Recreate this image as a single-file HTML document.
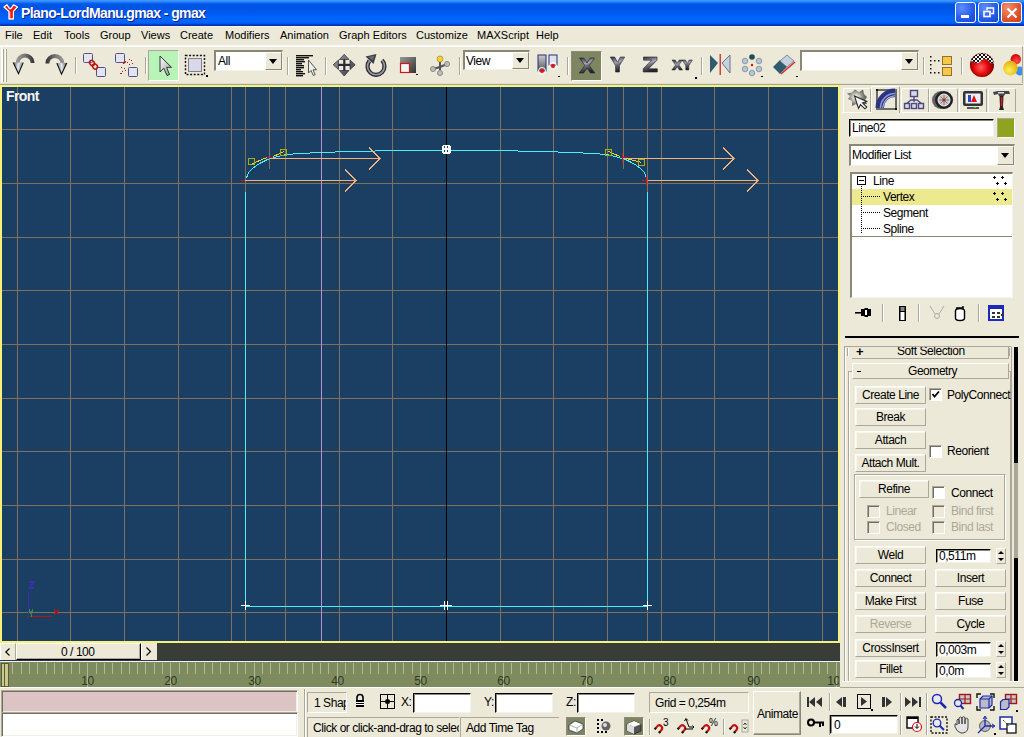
<!DOCTYPE html>
<html><head><meta charset="utf-8">
<style>
*{margin:0;padding:0;box-sizing:border-box}
html,body{width:1024px;height:737px;overflow:hidden}
body{position:relative;background:#ECE9D8;font-family:"Liberation Sans",sans-serif;font-size:11px;color:#000}
.a{position:absolute}
.t{position:absolute;white-space:nowrap;line-height:1}
svg{overflow:visible}
#title{left:0;top:0;width:1024px;height:26px;background:linear-gradient(#3D95FF 0px,#3A92FF 1px,#2a80ff 2px,#0663F2 3px,#0055E2 5px,#0055E6 9px,#005CF2 14px,#0064FC 18px,#0066FF 21px,#0060F6 23px,#004DD8 24px,#0030B8 25px,#0030B8 26px)}
</style></head><body>
<div id="title" class="a"></div>
<svg class="a" style="left:3px;top:4px" width="16" height="16" viewBox="0 0 16 16" ><path d="M1,3 L4,0.8 L6.5,4.5 L8,4.5 L10.5,0.8 L14.5,3 L10.5,7.5 L10.5,15 L6,15 L6,7.5 Z" fill="#000" transform="translate(0.8,0.8)"/><path d="M1,3 L4,0.8 L6.5,4.5 L8,4.5 L10.5,0.8 L14.5,3 L10.5,7.5 L10.5,15 L6,15 L6,7.5 Z" fill="#F01818" stroke="#fff" stroke-width="1.3" stroke-linejoin="round"/><path d="M7,8 L7,14" stroke="#fff" stroke-width="0.8" opacity="0.6"/></svg>
<div class="t" style="left:21px;top:6px;font-size:14px;font-weight:bold;letter-spacing:-0.6px;color:#fff;text-shadow:1px 1px 0 #0A1E8A">Plano-LordManu.gmax - gmax</div>
<div class="a" style="left:955px;top:2px;width:21px;height:21px;border:1px solid #fff;border-radius:3px;background:radial-gradient(circle at 30% 25%,#5C8EFF,#2559E8 60%,#1C46D2)"></div>
<div class="a" style="left:978px;top:2px;width:21px;height:21px;border:1px solid #fff;border-radius:3px;background:radial-gradient(circle at 30% 25%,#5C8EFF,#2559E8 60%,#1C46D2)"></div>
<div class="a" style="left:1001px;top:2px;width:21px;height:21px;border:1px solid #fff;border-radius:3px;background:radial-gradient(circle at 30% 25%,#F2906C,#E0512C 60%,#C8401E)"></div>
<div class="a" style="left:961px;top:15px;width:8px;height:3px;background:#fff"></div>
<svg class="a" style="left:983px;top:7px" width="12" height="12" viewBox="0 0 12 12" ><rect x="1" y="4.5" width="6" height="5" fill="none" stroke="#fff" stroke-width="1.6"/><path d="M4,3.5 L4,1 L10.5,1 L10.5,6.5 L8,6.5" fill="none" stroke="#fff" stroke-width="1.4"/></svg>
<svg class="a" style="left:1005px;top:6px" width="14" height="14" viewBox="0 0 14 14" ><path d="M2.5,2.5 L11.5,11.5 M11.5,2.5 L2.5,11.5" stroke="#fff" stroke-width="2.2"/></svg>
<div class="a" style="left:0;top:26px;width:1024px;height:1px;background:#F7F5E6"></div>
<div class="t" style="left:5px;top:30px;font-size:11px;">File</div>
<div class="t" style="left:33px;top:30px;font-size:11px;">Edit</div>
<div class="t" style="left:64px;top:30px;font-size:11px;">Tools</div>
<div class="t" style="left:100px;top:30px;font-size:11px;">Group</div>
<div class="t" style="left:141px;top:30px;font-size:11px;">Views</div>
<div class="t" style="left:180px;top:30px;font-size:11px;">Create</div>
<div class="t" style="left:225px;top:30px;font-size:11px;">Modifiers</div>
<div class="t" style="left:280px;top:30px;font-size:11px;">Animation</div>
<div class="t" style="left:339px;top:30px;font-size:11px;">Graph Editors</div>
<div class="t" style="left:416px;top:30px;font-size:11px;">Customize</div>
<div class="t" style="left:477px;top:30px;font-size:11px;">MAXScript</div>
<div class="t" style="left:536px;top:30px;font-size:11px;">Help</div>
<div class="a" style="left:0;top:45px;width:1024px;height:1px;background:#FAF9F4"></div>
<div class="a" style="left:0;top:46px;width:1024px;height:1px;background:#fff"></div>
<div class="a" style="left:1px;top:46px;width:1px;height:38px;background:#fff"></div>
<div class="a" style="left:2px;top:49px;width:1px;height:33px;background:#fff"></div><div class="a" style="left:3px;top:49px;width:1px;height:33px;background:#ACA899"></div>
<div class="a" style="left:5px;top:49px;width:1px;height:33px;background:#fff"></div><div class="a" style="left:6px;top:49px;width:1px;height:33px;background:#ACA899"></div>
<svg class="a" style="left:13px;top:54px" width="23" height="21" viewBox="0 0 23 21" ><defs><linearGradient id="ug1" x1="0" y1="0" x2="1" y2="0"><stop offset="0" stop-color="#9a9a9a"/><stop offset="0.45" stop-color="#7a7a7a"/><stop offset="1" stop-color="#2e2e2e"/></linearGradient><linearGradient id="ua1" x1="0" y1="0" x2="1" y2="0.2"><stop offset="0" stop-color="#505058"/><stop offset="0.55" stop-color="#e8e8ee"/><stop offset="1" stop-color="#70707a"/></linearGradient></defs><path d="M2.6,9 A9.5,9.5 0 0 1 21.6,9 L17.6,9 A5.5,5.5 0 0 0 6.6,9 Z" fill="url(#ug1)"/><path d="M0.2,8.6 L10.2,8.6 L5.5,19.6 Z" fill="url(#ua1)"/><path d="M0.2,8.6 L5.5,19.6 L10.2,8.6" fill="none" stroke="#111" stroke-width="1.1"/></svg>
<svg class="a" style="left:45px;top:54px" width="23" height="21" viewBox="0 0 23 21" ><g transform="translate(22,0.5) scale(-1,1)"><defs><linearGradient id="ug2" x1="0" y1="0" x2="1" y2="0"><stop offset="0" stop-color="#9a9a9a"/><stop offset="0.45" stop-color="#7a7a7a"/><stop offset="1" stop-color="#2e2e2e"/></linearGradient><linearGradient id="ua2" x1="0" y1="0" x2="1" y2="0.2"><stop offset="0" stop-color="#505058"/><stop offset="0.55" stop-color="#e8e8ee"/><stop offset="1" stop-color="#70707a"/></linearGradient></defs><path d="M2.6,9 A9.5,9.5 0 0 1 21.6,9 L17.6,9 A5.5,5.5 0 0 0 6.6,9 Z" fill="url(#ug2)"/><path d="M0.2,8.6 L10.2,8.6 L5.5,19.6 Z" fill="url(#ua2)"/><path d="M0.2,8.6 L5.5,19.6 L10.2,8.6" fill="none" stroke="#111" stroke-width="1.1"/></g></svg>
<div class="a" style="left:75px;top:57px;width:1px;height:17px;background:#ACA899"></div><div class="a" style="left:76px;top:57px;width:1px;height:17px;background:#fff"></div>
<svg class="a" style="left:83px;top:53px" width="24" height="25" viewBox="0 0 24 25" ><rect x="0.5" y="0.5" width="9" height="9" rx="1" fill="#E4E4F0" stroke="#50508C"/><rect x="13.5" y="14.5" width="9" height="9" rx="1" fill="#E4E4F0" stroke="#50508C"/><g fill="none" stroke="#C01010" stroke-width="1.5"><ellipse cx="9" cy="10" rx="2.2" ry="2.8" transform="rotate(-40 9 10)"/><ellipse cx="12" cy="13.5" rx="2.2" ry="2.8" transform="rotate(-40 12 13.5)"/></g></svg>
<svg class="a" style="left:115px;top:53px" width="24" height="25" viewBox="0 0 24 25" ><rect x="0.5" y="0.5" width="9" height="9" rx="1" fill="#E4E4F0" stroke="#50508C"/><rect x="13.5" y="14.5" width="9" height="9" rx="1" fill="#E4E4F0" stroke="#50508C"/><g fill="#C01010"><path d="M8,11 A2.5,2.5 0 0 1 11,8 L11,9.5 A1.2,1.2 0 0 0 9.5,11 Z"/><rect x="14" y="6" width="1" height="1"/><rect x="16" y="7" width="1" height="1"/><rect x="12" y="9" width="1" height="1"/><rect x="17" y="10" width="1" height="1"/><rect x="14" y="11" width="1" height="1"/><rect x="6" y="14" width="1" height="1"/><rect x="9" y="15" width="1" height="1"/><rect x="7" y="18" width="1" height="1"/><rect x="10" y="17" width="1" height="1"/><rect x="5" y="20" width="2" height="1"/></g></svg>
<div class="a" style="left:145px;top:57px;width:1px;height:17px;background:#ACA899"></div><div class="a" style="left:146px;top:57px;width:1px;height:17px;background:#fff"></div>
<div class="a" style="left:148px;top:50px;width:31px;height:31px;background:#B8F4B8;border:1px solid;border-color:#ACA899 #fff #fff #ACA899"></div>
<svg class="a" style="left:159px;top:55px" width="14" height="23" viewBox="0 0 14 23" ><defs><linearGradient id="cur" x1="0" y1="0" x2="1" y2="1"><stop offset="0" stop-color="#fff"/><stop offset="1" stop-color="#999"/></linearGradient></defs><path d="M1,1 L1,17 L4.8,13.2 L8,20.5 L10.5,19.5 L7.5,12.3 L12.5,12.3 Z" fill="url(#cur)" stroke="#333" stroke-width="1"/></svg>
<svg class="a" style="left:184px;top:54px" width="25" height="24" viewBox="0 0 25 24" ><rect x="1.5" y="1.5" width="19" height="19" fill="none" stroke="#111" stroke-width="1.4" stroke-dasharray="2,1.6"/><rect x="4.5" y="4.5" width="13" height="13" fill="#D8D8E8" stroke="#808090"/><path d="M22,21 L24,21 L24,23 L22,23Z" fill="#000"/></svg>
<div class="a" style="left:214px;top:50px;width:69px;height:21px;background:#fff;border-top:2px solid #8A8776;border-left:2px solid #8A8776;border-right:1px solid #F4F2E8;border-bottom:1px solid #F4F2E8"><div class="a" style="right:0;top:0;width:17px;height:18px;background:#ECE9D8;border-right:1px solid #8A8776;border-bottom:1px solid #8A8776;border-left:1px solid #fff;border-top:1px solid #fff"></div><div class="a" style="right:5px;top:7px;width:0;height:0;border-left:4px solid transparent;border-right:4px solid transparent;border-top:5px solid #000"></div><div class="t" style="left:2px;top:3px;font-size:12px;letter-spacing:-0.45px">All</div></div>
<div class="a" style="left:287px;top:57px;width:1px;height:18px;background:#ACA899"></div><div class="a" style="left:288px;top:57px;width:1px;height:18px;background:#fff"></div>
<svg class="a" style="left:295px;top:54px" width="23" height="23" viewBox="0 0 23 23" ><g fill="#111"><rect x="1" y="1" width="17" height="1.4"/><rect x="1" y="3" width="13" height="1.4"/><rect x="1" y="5" width="8" height="1.4"/><rect x="1" y="7" width="9" height="1.4"/><rect x="1" y="9" width="6" height="1.4"/><rect x="1" y="11" width="8" height="1.4"/><rect x="1" y="13" width="8" height="1.4"/><rect x="1" y="15" width="5" height="1.4"/><rect x="1" y="17" width="7" height="1.4"/><rect x="1" y="19" width="9" height="1.4"/><rect x="1" y="21" width="7" height="1.4"/></g><path d="M13.5,6 L13.5,19 L16,16.5 L18.3,21.5 L20.2,20.6 L18,15.8 L21.5,15.8 Z" fill="#EEE" stroke="#444" stroke-width="0.9"/></svg>
<div class="a" style="left:325px;top:57px;width:1px;height:18px;background:#ACA899"></div><div class="a" style="left:326px;top:57px;width:1px;height:18px;background:#fff"></div>
<svg class="a" style="left:333px;top:54px" width="23" height="23" viewBox="0 0 23 23" ><defs><linearGradient id="mv" x1="0" y1="0" x2="1" y2="1"><stop offset="0" stop-color="#9a9aa4"/><stop offset="1" stop-color="#3a3a44"/></linearGradient></defs><rect x="10.2" y="4" width="2.2" height="15" fill="#2a2a32"/><rect x="4" y="9.8" width="15" height="2.2" fill="#2a2a32"/><path d="M11.2,0.3 L16,5.5 L6.4,5.5 Z M11.2,22 L16,16.5 L6.4,16.5 Z M0.2,10.8 L5.5,6 L5.5,15.6 Z M22.2,10.8 L17,6 L17,15.6 Z" fill="url(#mv)" stroke="#2a2a32" stroke-width="0.7"/></svg>
<svg class="a" style="left:365px;top:55px" width="23" height="23" viewBox="0 0 23 23" ><path d="M17,5.3 A8.5,8.5 0 1 1 4.4,5.95" fill="none" stroke="#2a2a30" stroke-width="4.2"/><path d="M17,5.3 A8.5,8.5 0 1 1 4.4,5.95" fill="none" stroke="#9c9ca8" stroke-width="1.6"/><path d="M0.5,1.5 L11.5,-1 L8.5,9 Z" fill="#3a3a42"/><path d="M3,2 L9.5,0.5 L8,5.5 Z" fill="#6a6a74"/></svg>
<svg class="a" style="left:399px;top:56px" width="19" height="19" viewBox="0 0 19 19" ><defs><linearGradient id="sc" x1="0" y1="0" x2="1" y2="1"><stop offset="0" stop-color="#999"/><stop offset="1" stop-color="#333"/></linearGradient></defs><rect x="1" y="1" width="16" height="16" fill="url(#sc)"/><rect x="1.5" y="7.5" width="9" height="9" fill="#F4F4F4" stroke="#D01818" stroke-width="1.2"/><rect x="17" y="18" width="2" height="1" fill="#000"/></svg>
<svg class="a" style="left:430px;top:55px" width="20" height="21" viewBox="0 0 20 21" ><g stroke="#555" stroke-width="2"><path d="M10,5 L10,15 M3,14 L10,12 L17,9"/></g><circle cx="10" cy="4" r="3" fill="#F4D040" stroke="#A08010" stroke-width="0.6"/><circle cx="3" cy="14" r="2.6" fill="#bbb" stroke="#666" stroke-width="0.6"/><circle cx="17" cy="9" r="2.6" fill="#bbb" stroke="#666" stroke-width="0.6"/><circle cx="10" cy="18" r="2.6" fill="#bbb" stroke="#666" stroke-width="0.6"/></svg>
<div class="a" style="left:459px;top:57px;width:1px;height:18px;background:#ACA899"></div><div class="a" style="left:460px;top:57px;width:1px;height:18px;background:#fff"></div>
<div class="a" style="left:463px;top:50px;width:67px;height:20px;background:#fff;border-top:2px solid #8A8776;border-left:2px solid #8A8776;border-right:1px solid #F4F2E8;border-bottom:1px solid #F4F2E8"><div class="a" style="right:0;top:0;width:17px;height:17px;background:#ECE9D8;border-right:1px solid #8A8776;border-bottom:1px solid #8A8776;border-left:1px solid #fff;border-top:1px solid #fff"></div><div class="a" style="right:5px;top:6px;width:0;height:0;border-left:4px solid transparent;border-right:4px solid transparent;border-top:5px solid #000"></div><div class="t" style="left:1px;top:3px;font-size:12px;letter-spacing:-0.45px">View</div></div>
<svg class="a" style="left:537px;top:54px" width="23" height="23" viewBox="0 0 23 23" ><defs><linearGradient id="pv" x1="0" y1="0" x2="0" y2="1"><stop offset="0" stop-color="#ccc"/><stop offset="1" stop-color="#555"/></linearGradient></defs><rect x="1" y="1" width="8" height="16" fill="url(#pv)" stroke="#223080" stroke-width="1"/><rect x="12" y="1" width="8" height="10" fill="#E0E0F0" stroke="#223080" stroke-width="1"/><circle cx="5" cy="17" r="3.5" fill="none" stroke="#fff" stroke-width="1"/><circle cx="5" cy="17" r="2" fill="#E81010"/><circle cx="16" cy="12" r="3.5" fill="none" stroke="#fff" stroke-width="1"/><circle cx="16" cy="12" r="2" fill="#E81010"/><rect x="21" y="22" width="2" height="1" fill="#000"/></svg>
<div class="a" style="left:567px;top:57px;width:1px;height:18px;background:#ACA899"></div><div class="a" style="left:568px;top:57px;width:1px;height:18px;background:#fff"></div>
<div class="a" style="left:571px;top:51px;width:31px;height:30px;background:#7D8561;border:1px solid;border-color:#8D8B7C #fff #fff #8D8B7C"></div>
<svg class="a" style="left:579px;top:58px" width="16" height="16" viewBox="0 0 16 16" ><defs><linearGradient id="gx" x1="0" y1="0" x2="0.3" y2="1"><stop offset="0" stop-color="#2c2c36"/><stop offset="0.45" stop-color="#a4a4b4"/><stop offset="0.6" stop-color="#70707e"/><stop offset="1" stop-color="#24242c"/></linearGradient></defs><path d="M0.5,0 L4.8,0 L8,5 L11.2,0 L15.5,0 L10.2,7.5 L15.8,15 L11.5,15 L8,10 L4.5,15 L0.2,15 L5.8,7.5 Z" fill="url(#gx)" stroke="#1e1e26" stroke-width="0.6"/></svg>
<svg class="a" style="left:610px;top:57px" width="16" height="16" viewBox="0 0 16 16" ><defs><linearGradient id="gy" x1="0" y1="0" x2="0.3" y2="1"><stop offset="0" stop-color="#2c2c36"/><stop offset="0.45" stop-color="#a4a4b4"/><stop offset="0.6" stop-color="#70707e"/><stop offset="1" stop-color="#24242c"/></linearGradient></defs><path d="M0.3,0 L4.6,0 L7.5,5.2 L10.4,0 L14.7,0 L9.4,8.6 L9.4,15 L5.6,15 L5.6,8.6 Z" fill="url(#gy)" stroke="#1e1e26" stroke-width="0.6"/></svg>
<svg class="a" style="left:643px;top:57px" width="15" height="16" viewBox="0 0 15 16" ><defs><linearGradient id="gz" x1="0" y1="0" x2="0.3" y2="1"><stop offset="0" stop-color="#2c2c36"/><stop offset="0.45" stop-color="#a4a4b4"/><stop offset="0.6" stop-color="#70707e"/><stop offset="1" stop-color="#24242c"/></linearGradient></defs><path d="M0.5,0 L14,0 L14,3.2 L5.6,11.8 L14.3,11.8 L14.3,15 L0.2,15 L0.2,11.8 L8.6,3.2 L0.5,3.2 Z" fill="url(#gz)" stroke="#1e1e26" stroke-width="0.6"/></svg>
<svg class="a" style="left:672px;top:60px" width="21" height="11" viewBox="0 0 21 11" ><defs><linearGradient id="gxy" x1="0" y1="0" x2="0.3" y2="1"><stop offset="0" stop-color="#2c2c36"/><stop offset="0.45" stop-color="#a4a4b4"/><stop offset="0.6" stop-color="#70707e"/><stop offset="1" stop-color="#24242c"/></linearGradient></defs><path d="M0,0 L3.2,0 L5.2,3.3 L7.2,0 L10.4,0 L6.9,5 L10.6,10 L7.4,10 L5.2,6.7 L3,10 L-0.2,10 L3.5,5 Z M10.2,0 L13.4,0 L15.3,3.4 L17.2,0 L20.4,0 L16.8,5.8 L16.8,10 L13.8,10 L13.8,5.8 Z" fill="url(#gxy)" stroke="#1e1e26" stroke-width="0.5"/></svg>
<div class="a" style="left:695px;top:77px;width:2px;height:2px;background:#000"></div>
<div class="a" style="left:701px;top:57px;width:1px;height:18px;background:#ACA899"></div><div class="a" style="left:702px;top:57px;width:1px;height:18px;background:#fff"></div>
<svg class="a" style="left:709px;top:54px" width="23" height="21" viewBox="0 0 23 21" ><path d="M1,1 L9,9 L1,19 Z" fill="#2E5C6E"/><path d="M21,1 L13,9 L21,19 Z" fill="#C8D0DC" stroke="#6A7480"/><rect x="10.5" y="0" width="1.5" height="21" fill="#D04040"/></svg>
<svg class="a" style="left:741px;top:54px" width="22" height="23" viewBox="0 0 22 23" ><circle cx="11" cy="3" r="2.8" fill="#244858"/><circle cx="4" cy="7" r="2.8" fill="#B8C4D8" stroke="#607080" stroke-width="0.6"/><circle cx="18" cy="7" r="2.8" fill="#B8C4D8" stroke="#607080" stroke-width="0.6"/><circle cx="4" cy="15" r="2.8" fill="#B8C4D8" stroke="#607080" stroke-width="0.6"/><circle cx="18" cy="15" r="2.8" fill="#B8C4D8" stroke="#607080" stroke-width="0.6"/><circle cx="11" cy="19" r="2.8" fill="#B8C4D8" stroke="#607080" stroke-width="0.6"/><circle cx="11" cy="11" r="1.2" fill="#E01010"/><rect x="20" y="22" width="2" height="1" fill="#000"/></svg>
<svg class="a" style="left:772px;top:54px" width="26" height="24" viewBox="0 0 26 24" ><path d="M1,13 L8,6 L15,13 L8,20 Z" fill="#2E5C6E"/><path d="M8,7 L15,1 L22,7 L15,13 Z" fill="#C8D0E0" stroke="#6A7480" stroke-width="0.8"/><path d="M9,20 L23,8" stroke="#E02828" stroke-width="1.5"/><rect x="24" y="22" width="2" height="1" fill="#000"/></svg>
<div class="a" style="left:800px;top:50px;width:119px;height:21px;background:#fff;border-top:2px solid #8A8776;border-left:2px solid #8A8776;border-right:1px solid #F4F2E8;border-bottom:1px solid #F4F2E8"><div class="a" style="right:0;top:0;width:17px;height:18px;background:#ECE9D8;border-right:1px solid #8A8776;border-bottom:1px solid #8A8776;border-left:1px solid #fff;border-top:1px solid #fff"></div><div class="a" style="right:5px;top:7px;width:0;height:0;border-left:4px solid transparent;border-right:4px solid transparent;border-top:5px solid #000"></div></div>
<div class="a" style="left:923px;top:57px;width:1px;height:18px;background:#ACA899"></div><div class="a" style="left:924px;top:57px;width:1px;height:18px;background:#fff"></div>
<svg class="a" style="left:929px;top:54px" width="25" height="23" viewBox="0 0 25 23" ><g fill="#111"><rect x="1" y="2" width="1.5" height="1.5"/><rect x="1" y="6" width="1.5" height="1.5"/><rect x="1" y="10" width="1.5" height="1.5"/><rect x="1" y="14" width="1.5" height="1.5"/><rect x="1" y="18" width="1.5" height="1.5"/><rect x="5" y="6" width="1.5" height="1.5"/><rect x="9" y="6" width="1.5" height="1.5"/><rect x="5" y="18" width="1.5" height="1.5"/><rect x="9" y="18" width="1.5" height="1.5"/></g><rect x="13.5" y="2.5" width="9" height="8" fill="#F4C84C" stroke="#9A7020"/><rect x="13.5" y="13.5" width="9" height="8" fill="#F4C84C" stroke="#9A7020"/></svg>
<div class="a" style="left:961px;top:57px;width:1px;height:18px;background:#ACA899"></div><div class="a" style="left:962px;top:57px;width:1px;height:18px;background:#fff"></div>
<svg class="a" style="left:969px;top:52px" width="27" height="26" viewBox="0 0 27 26" ><defs><radialGradient id="me" cx="0.45" cy="0.6" r="0.6"><stop offset="0" stop-color="#FF6060"/><stop offset="0.5" stop-color="#E00808"/><stop offset="1" stop-color="#700000"/></radialGradient><clipPath id="mc"><circle cx="13" cy="13" r="12"/></clipPath><clipPath id="mw"><path d="M0,0 L26,0 L26,11 Q22,13 20,9 Q16,5 12,9 Q8,13 5,10 Q2,8 0,12 Z"/></clipPath></defs><circle cx="13" cy="13" r="12" fill="url(#me)"/><g clip-path="url(#mc)"><g clip-path="url(#mw)"><rect x="0" y="0" width="26" height="14" fill="#fff"/><rect x="0" y="0" width="2" height="2" fill="#111"/><rect x="4" y="0" width="2" height="2" fill="#111"/><rect x="8" y="0" width="2" height="2" fill="#111"/><rect x="12" y="0" width="2" height="2" fill="#111"/><rect x="16" y="0" width="2" height="2" fill="#111"/><rect x="20" y="0" width="2" height="2" fill="#111"/><rect x="24" y="0" width="2" height="2" fill="#111"/><rect x="2" y="2" width="2" height="2" fill="#111"/><rect x="6" y="2" width="2" height="2" fill="#111"/><rect x="10" y="2" width="2" height="2" fill="#111"/><rect x="14" y="2" width="2" height="2" fill="#111"/><rect x="18" y="2" width="2" height="2" fill="#111"/><rect x="22" y="2" width="2" height="2" fill="#111"/><rect x="0" y="4" width="2" height="2" fill="#111"/><rect x="4" y="4" width="2" height="2" fill="#111"/><rect x="8" y="4" width="2" height="2" fill="#111"/><rect x="12" y="4" width="2" height="2" fill="#111"/><rect x="16" y="4" width="2" height="2" fill="#111"/><rect x="20" y="4" width="2" height="2" fill="#111"/><rect x="24" y="4" width="2" height="2" fill="#111"/><rect x="2" y="6" width="2" height="2" fill="#111"/><rect x="6" y="6" width="2" height="2" fill="#111"/><rect x="10" y="6" width="2" height="2" fill="#111"/><rect x="14" y="6" width="2" height="2" fill="#111"/><rect x="18" y="6" width="2" height="2" fill="#111"/><rect x="22" y="6" width="2" height="2" fill="#111"/><rect x="0" y="8" width="2" height="2" fill="#111"/><rect x="4" y="8" width="2" height="2" fill="#111"/><rect x="8" y="8" width="2" height="2" fill="#111"/><rect x="12" y="8" width="2" height="2" fill="#111"/><rect x="16" y="8" width="2" height="2" fill="#111"/><rect x="20" y="8" width="2" height="2" fill="#111"/><rect x="24" y="8" width="2" height="2" fill="#111"/><rect x="2" y="10" width="2" height="2" fill="#111"/><rect x="6" y="10" width="2" height="2" fill="#111"/><rect x="10" y="10" width="2" height="2" fill="#111"/><rect x="14" y="10" width="2" height="2" fill="#111"/><rect x="18" y="10" width="2" height="2" fill="#111"/><rect x="22" y="10" width="2" height="2" fill="#111"/><rect x="0" y="12" width="2" height="2" fill="#111"/><rect x="4" y="12" width="2" height="2" fill="#111"/><rect x="8" y="12" width="2" height="2" fill="#111"/><rect x="12" y="12" width="2" height="2" fill="#111"/><rect x="16" y="12" width="2" height="2" fill="#111"/><rect x="20" y="12" width="2" height="2" fill="#111"/><rect x="24" y="12" width="2" height="2" fill="#111"/></g></g><circle cx="13" cy="13" r="11.5" fill="none" stroke="#600" stroke-width="0.8" opacity="0.5"/></svg>
<div class="a" style="left:1000px;top:50px;width:22px;height:30px;overflow:hidden"><svg class="a" style="left:0px;top:0px" width="24" height="30" viewBox="0 0 24 30" ><defs><radialGradient id="ry" cx="0.4" cy="0.65" r="0.7"><stop offset="0" stop-color="#FFF060"/><stop offset="1" stop-color="#E0A800"/></radialGradient><radialGradient id="rr" cx="0.6" cy="0.7" r="0.7"><stop offset="0" stop-color="#FF5050"/><stop offset="1" stop-color="#D00000"/></radialGradient></defs><circle cx="15.8" cy="9.2" r="5.2" fill="url(#rr)"/><circle cx="20" cy="21" r="4.5" fill="#3A90F0"/><circle cx="10.5" cy="18.1" r="7.3" fill="url(#ry)"/></svg></div>
<div class="a" style="left:1022px;top:46px;width:1px;height:39px;background:#ACA899"></div>
<div class="a" style="left:0;top:83px;width:1024px;height:1px;background:#E4E0CE"></div>
<div class="a" style="left:0;top:84px;width:1022px;height:1px;background:#A6A391"></div>
<div class="a" style="left:0;top:85px;width:840px;height:558px;background:#F8F17A"></div>
<div class="a" style="left:2px;top:87px;width:836px;height:554px;background:#1B3E63;overflow:hidden">
<svg width="836" height="554" style="position:absolute;left:0;top:0" shape-rendering="crispEdges">
<rect x="15" y="0" width="1" height="554" fill="#80705F"/>
<rect x="68" y="0" width="1" height="554" fill="#80705F"/>
<rect x="122" y="0" width="1" height="554" fill="#80705F"/>
<rect x="176" y="0" width="1" height="554" fill="#80705F"/>
<rect x="229" y="0" width="1" height="554" fill="#80705F"/>
<rect x="283" y="0" width="1" height="554" fill="#80705F"/>
<rect x="337" y="0" width="1" height="554" fill="#80705F"/>
<rect x="390" y="0" width="1" height="554" fill="#80705F"/>
<rect x="498" y="0" width="1" height="554" fill="#80705F"/>
<rect x="551" y="0" width="1" height="554" fill="#80705F"/>
<rect x="605" y="0" width="1" height="554" fill="#80705F"/>
<rect x="659" y="0" width="1" height="554" fill="#80705F"/>
<rect x="712" y="0" width="1" height="554" fill="#80705F"/>
<rect x="766" y="0" width="1" height="554" fill="#80705F"/>
<rect x="820" y="0" width="1" height="554" fill="#80705F"/>
<rect x="243" y="0" width="1" height="554" fill="#80705F"/>
<rect x="645" y="0" width="1" height="554" fill="#80705F"/>
<rect x="267" y="0" width="1" height="82" fill="#80705F"/>
<rect x="621" y="0" width="1" height="82" fill="#80705F"/>
<rect x="0" y="42" width="836" height="1" fill="#80705F"/>
<rect x="0" y="96" width="836" height="1" fill="#80705F"/>
<rect x="0" y="150" width="836" height="1" fill="#80705F"/>
<rect x="0" y="203" width="836" height="1" fill="#80705F"/>
<rect x="0" y="257" width="836" height="1" fill="#80705F"/>
<rect x="0" y="311" width="836" height="1" fill="#80705F"/>
<rect x="0" y="364" width="836" height="1" fill="#80705F"/>
<rect x="0" y="418" width="836" height="1" fill="#80705F"/>
<rect x="0" y="472" width="836" height="1" fill="#80705F"/>
<rect x="0" y="525" width="836" height="1" fill="#80705F"/>
<rect x="319" y="0" width="1" height="554" fill="#B890D8"/>
<rect x="444" y="0" width="1" height="554" fill="#000"/>
</svg>
<svg width="836" height="554" style="position:absolute;left:0;top:0">
<g transform="translate(-2,-87)" fill="none" stroke-width="1" shape-rendering="crispEdges">
<rect x="245" y="192" width="1" height="414" fill="#48EEF8" stroke="none"/>
<rect x="647" y="192" width="1" height="414" fill="#48EEF8" stroke="none"/>
<rect x="245" y="606" width="403" height="1" fill="#48EEF8" stroke="none"/>
<path d="M246.5,178.5 L247.5,174.5 L249.5,171.5 L252.5,168.5 L256.5,165.5 L261.5,162.5 L267.5,159.5 L274.5,157.5 L285.5,154.5 L300.5,153.5 L320.5,152.5 L350.5,151.5 L400.5,150.5 L438.5,150.5 L446.5,149.5 L454.5,150.5 L492.5,150.5 L542.5,151.5 L572.5,152.5 L592.5,153.5 L607.5,154.5 L618.5,157.5 L625.5,159.5 L631.5,162.5 L636.5,165.5 L640.5,168.5 L643.5,171.5 L645.5,174.5 L646.5,178.5" stroke="#48EEF8" shape-rendering="crispEdges"/>
<path d="M270,158.5 L380,158.5 M369,147.5 L380,158.5 L369,169.5" stroke="#F5B07C" shape-rendering="crispEdges"/>
<path d="M245,180.5 L356,180.5 M345,169.5 L356,180.5 L345,191.5" stroke="#F5B07C" shape-rendering="crispEdges"/>
<path d="M624,158.5 L734,158.5 M723,147.5 L734,158.5 L723,169.5" stroke="#F5B07C" shape-rendering="crispEdges"/>
<path d="M648,180.5 L758,180.5 M747,169.5 L758,180.5 L747,191.5" stroke="#F5B07C" shape-rendering="crispEdges"/>
<rect x="241" y="180" width="4" height="1" fill="#D0101A" stroke="none"/>
<rect x="265" y="157" width="8" height="1" fill="#D0101A" stroke="none"/>
<rect x="622" y="153" width="1" height="10" fill="#D0101A" stroke="none"/>
<rect x="623" y="157" width="5" height="1" fill="#D0101A" stroke="none"/>
<rect x="646" y="176" width="1" height="10" fill="#D0101A" stroke="none"/>
<rect x="642" y="180" width="4" height="1" fill="#D0101A" stroke="none"/>
<path d="M252.5,163.5 L267,157.5 M273,156.5 L284.5,151.5" stroke="#F0D020" shape-rendering="crispEdges"/>
<path d="M608.5,151.5 L620,156.5 M626,158.5 L641.5,162.5" stroke="#F0D020" shape-rendering="crispEdges"/>
<rect x="248.5" y="158.5" width="6" height="6" stroke="#A8B010"/>
<rect x="280.5" y="149.5" width="6" height="6" stroke="#A8B010"/>
<rect x="605.5" y="149.5" width="6" height="6" stroke="#A8B010"/>
<rect x="638.5" y="159.5" width="6" height="6" stroke="#A8B010"/>
<path d="M443,145 L450,145 L450,146 L451,146 L451,153 L450,153 L450,154 L443,154 L443,153 L442,153 L442,146 L443,146 Z" fill="#fff" stroke="none"/>
<rect x="444" y="146" width="1" height="2" fill="#1B3E63" stroke="none"/><rect x="447" y="146" width="1" height="2" fill="#1B3E63" stroke="none"/>
<rect x="444" y="150" width="1" height="2" fill="#1B3E63" stroke="none"/><rect x="447" y="150" width="1" height="2" fill="#1B3E63" stroke="none"/>
<rect x="241" y="605" width="9" height="1" fill="#fff" stroke="none"/><rect x="245" y="601" width="1" height="9" fill="#fff" stroke="none"/>
<rect x="643" y="605" width="9" height="1" fill="#fff" stroke="none"/><rect x="647" y="601" width="1" height="9" fill="#fff" stroke="none"/>
<rect x="440" y="605" width="12" height="1" fill="#fff" stroke="none"/><rect x="444" y="601" width="1" height="9" fill="#fff" stroke="none"/><rect x="447" y="601" width="1" height="9" fill="#fff" stroke="none"/>
<rect x="28" y="592" width="1" height="24" fill="#3A2FB0" stroke="none"/>
<rect x="28" y="616" width="24" height="1" fill="#B01818" stroke="none"/>
<path d="M54,609 L59,615 M59,609 L54,615" stroke="#B01818" stroke-width="1.3" shape-rendering="crispEdges"/>
<path d="M29,609 L31,614 L33,609 M31,614 L31,617" stroke="#3C8C3C" stroke-width="1" shape-rendering="crispEdges"/>
<path d="M29,582 L34,582 L29,588 L34,588" stroke="#3A2FB0" stroke-width="1.2" shape-rendering="crispEdges"/>
</g></svg>
<div class="t" style="left:4px;top:2px;font-size:14px;letter-spacing:-0.6px;font-weight:bold;color:#F4F4F4">Front</div>
</div>
<div class="a" style="left:842px;top:112px;width:179px;height:1px;background:#fff"></div>
<div class="a" style="left:843px;top:88px;width:28px;height:24px;background:#ECE9D8;border-left:1px solid #fff;border-top:1px solid #fff;border-right:1px solid #ACA899;border-radius:2px 2px 0 0"></div>
<div class="a" style="left:871px;top:86px;width:29px;height:27px;background:#ECE9D8;border-left:1px solid #fff;border-top:1px solid #fff;border-right:1px solid #ACA899;border-radius:2px 2px 0 0"></div>
<div class="a" style="left:901px;top:88px;width:28px;height:24px;background:#ECE9D8;border-left:1px solid #fff;border-top:1px solid #fff;border-right:1px solid #ACA899;border-radius:2px 2px 0 0"></div>
<div class="a" style="left:929px;top:88px;width:29px;height:24px;background:#ECE9D8;border-left:1px solid #fff;border-top:1px solid #fff;border-right:1px solid #ACA899;border-radius:2px 2px 0 0"></div>
<div class="a" style="left:959px;top:88px;width:28px;height:24px;background:#ECE9D8;border-left:1px solid #fff;border-top:1px solid #fff;border-right:1px solid #ACA899;border-radius:2px 2px 0 0"></div>
<div class="a" style="left:988px;top:88px;width:28px;height:24px;background:#ECE9D8;border-left:1px solid #fff;border-top:1px solid #fff;border-right:1px solid #ACA899;border-radius:2px 2px 0 0"></div>
<svg class="a" style="left:846px;top:89px" width="24" height="23" viewBox="0 0 24 23" ><defs><radialGradient id="spl" cx="0.45" cy="0.42" r="0.55"><stop offset="0" stop-color="#FFFFF4"/><stop offset="0.25" stop-color="#D8D8C8"/><stop offset="0.7" stop-color="#7A7A72"/><stop offset="1" stop-color="#5A5A54"/></radialGradient></defs><path d="M1,4.5 L6,3.5 L9,0.5 L13,3 L17,0.5 L18,5 L21,8 L19,11 L21,15 L16,15 L13,19 L10,15 L6,17 L6,12 L2,10 L4,7 Z" fill="url(#spl)"/><path d="M8.5,7 L8.5,20 L11.5,17 L14.5,22.5 L16.8,21.3 L14,16 L18.5,16 Z" transform="rotate(-18 8.5 7)" fill="#F4F4F4" stroke="#222" stroke-width="1"/></svg>
<svg class="a" style="left:876px;top:89px" width="22" height="21" viewBox="0 0 22 21" ><rect x="1" y="1" width="19" height="19" fill="none" stroke="#6A6A6A" stroke-width="2"/><rect x="0" y="0" width="2" height="2" fill="#111"/><rect x="19" y="19" width="2" height="2" fill="#111"/><path d="M3,19 A16,16 0 0 1 19,3" fill="none" stroke="#2A3480" stroke-width="7"/><path d="M4.5,19 A14.5,14.5 0 0 1 19,4.5" fill="none" stroke="#8C96E0" stroke-width="1.6"/><path d="M7.5,19 A11.5,11.5 0 0 1 19,7.5" fill="none" stroke="#4A56B0" stroke-width="1"/></svg>
<svg class="a" style="left:903px;top:89px" width="22" height="20" viewBox="0 0 22 20" ><rect x="7.5" y="1.5" width="7" height="6" fill="#D8D8E8" stroke="#4A4A80" stroke-width="1.4"/><path d="M11,8 L11,13 M3,15 L8,11 L14,11 L19,15" stroke="#4A4A80" stroke-width="1.4" fill="none"/><rect x="1.5" y="14.5" width="5" height="5" fill="#D8D8E8" stroke="#4A4A80" stroke-width="1.4"/><rect x="8.5" y="14.5" width="5" height="5" fill="#D8D8E8" stroke="#4A4A80" stroke-width="1.4"/><rect x="15.5" y="14.5" width="5" height="5" fill="#D8D8E8" stroke="#4A4A80" stroke-width="1.4"/></svg>
<svg class="a" style="left:932px;top:90px" width="22" height="21" viewBox="0 0 22 21" ><circle cx="9" cy="10" r="9" fill="#666"/><circle cx="12" cy="10" r="9" fill="#222"/><circle cx="12" cy="10" r="6" fill="#CCC" stroke="#eee" stroke-width="1"/><g stroke="#777" stroke-width="1"><path d="M12,5 L12,15 M7,10 L17,10 M8.5,6.5 L15.5,13.5 M15.5,6.5 L8.5,13.5"/></g><circle cx="12" cy="10" r="1.5" fill="#E01010"/></svg>
<svg class="a" style="left:962px;top:90px" width="22" height="20" viewBox="0 0 22 20" ><rect x="1" y="1" width="20" height="15" rx="2" fill="#333"/><rect x="3.5" y="3.5" width="15" height="10" fill="#F0F0F8"/><rect x="6" y="5" width="3" height="7" fill="#2A48C0"/><path d="M9,12 L12,5 L15,12 Z" fill="#E81010"/><rect x="5" y="17" width="12" height="2" fill="#555"/><rect x="12" y="17" width="2" height="1" fill="#3C3"/></svg>
<svg class="a" style="left:992px;top:90px" width="20" height="21" viewBox="0 0 20 21" ><path d="M1,2 L6,1 L17,1 L18,4 L13,4 L12,6 L7,6 L6,4 L2,5 Z" fill="#444"/><rect x="6" y="2" width="6" height="1.5" fill="#ddd"/><path d="M7.5,6 L11.5,6 L11,17 L12,20 L7,20 L8,17 Z" fill="#222"/><rect x="8.8" y="7" width="1.6" height="9" fill="#D02020"/></svg>
<div class="a" style="left:849px;top:119px;width:145px;height:18px;background:#fff;border:1px solid;border-color:#000 #F4F2E8 #F4F2E8 #000;box-shadow:inset 1px 1px 0 #8A8776"></div><div class="t" style="left:852px;top:122px;font-size:12px;letter-spacing:-0.45px">Line02</div>
<div class="a" style="left:997px;top:118px;width:18px;height:20px;border:1px solid;border-color:#ACA899 #fff #fff #ACA899;background:#8EA31E"></div>
<div class="a" style="left:849px;top:144px;width:166px;height:22px;background:#fff;border-top:2px solid #8A8776;border-left:2px solid #8A8776;border-right:1px solid #F4F2E8;border-bottom:1px solid #F4F2E8"><div class="a" style="right:0;top:0;width:17px;height:19px;background:#ECE9D8;border-right:1px solid #8A8776;border-bottom:1px solid #8A8776;border-left:1px solid #fff;border-top:1px solid #fff"></div><div class="a" style="right:5px;top:7px;width:0;height:0;border-left:4px solid transparent;border-right:4px solid transparent;border-top:5px solid #000"></div><div class="t" style="left:1px;top:3px;font-size:12px;letter-spacing:-0.45px">Modifier List</div></div>
<div class="a" style="left:850px;top:172px;width:163px;height:126px;background:#fff;border-top:2px solid #8A8776;border-left:2px solid #8A8776;border-right:1px solid #F8F6EE;border-bottom:1px solid #F8F6EE"></div>
<div class="a" style="left:852px;top:189px;width:160px;height:16px;background:#ECE98F"></div>
<div class="a" style="left:852px;top:236px;width:160px;height:1px;background:#8A8776"></div>
<div class="a" style="left:857px;top:176px;width:9px;height:9px;border:1px solid #000;background:#fff"></div><div class="a" style="left:859px;top:180px;width:5px;height:1px;background:#000"></div>
<svg class="a" style="left:861px;top:185px" width="26" height="49" viewBox="0 0 26 49" ><g fill="#000"><rect x="0" y="1" width="1" height="1"/><rect x="0" y="3" width="1" height="1"/><rect x="0" y="5" width="1" height="1"/><rect x="0" y="7" width="1" height="1"/><rect x="0" y="9" width="1" height="1"/><rect x="0" y="11" width="1" height="1"/><rect x="0" y="13" width="1" height="1"/><rect x="0" y="15" width="1" height="1"/><rect x="0" y="17" width="1" height="1"/><rect x="0" y="19" width="1" height="1"/><rect x="0" y="21" width="1" height="1"/><rect x="0" y="23" width="1" height="1"/><rect x="0" y="25" width="1" height="1"/><rect x="0" y="27" width="1" height="1"/><rect x="0" y="29" width="1" height="1"/><rect x="0" y="31" width="1" height="1"/><rect x="0" y="33" width="1" height="1"/><rect x="0" y="35" width="1" height="1"/><rect x="0" y="37" width="1" height="1"/><rect x="0" y="39" width="1" height="1"/><rect x="0" y="41" width="1" height="1"/><rect x="0" y="43" width="1" height="1"/><rect x="0" y="45" width="1" height="1"/><rect x="0" y="47" width="1" height="1"/><rect x="2" y="11" width="1" height="1"/><rect x="4" y="11" width="1" height="1"/><rect x="6" y="11" width="1" height="1"/><rect x="8" y="11" width="1" height="1"/><rect x="10" y="11" width="1" height="1"/><rect x="12" y="11" width="1" height="1"/><rect x="14" y="11" width="1" height="1"/><rect x="16" y="11" width="1" height="1"/><rect x="18" y="11" width="1" height="1"/><rect x="2" y="27" width="1" height="1"/><rect x="4" y="27" width="1" height="1"/><rect x="6" y="27" width="1" height="1"/><rect x="8" y="27" width="1" height="1"/><rect x="10" y="27" width="1" height="1"/><rect x="12" y="27" width="1" height="1"/><rect x="14" y="27" width="1" height="1"/><rect x="16" y="27" width="1" height="1"/><rect x="18" y="27" width="1" height="1"/><rect x="2" y="43" width="1" height="1"/><rect x="4" y="43" width="1" height="1"/><rect x="6" y="43" width="1" height="1"/><rect x="8" y="43" width="1" height="1"/><rect x="10" y="43" width="1" height="1"/><rect x="12" y="43" width="1" height="1"/><rect x="14" y="43" width="1" height="1"/><rect x="16" y="43" width="1" height="1"/><rect x="18" y="43" width="1" height="1"/></g></svg>
<div class="t" style="left:873px;top:175px;font-size:12px;letter-spacing:-0.45px">Line</div>
<div class="t" style="left:883px;top:191px;font-size:12px;letter-spacing:-0.45px">Vertex</div>
<div class="t" style="left:883px;top:207px;font-size:12px;letter-spacing:-0.45px">Segment</div>
<div class="t" style="left:883px;top:223px;font-size:12px;letter-spacing:-0.45px">Spline</div>
<svg class="a" style="left:992px;top:175px" width="16" height="12" viewBox="0 0 16 12" ><g fill="#000"><rect x="1" y="2" width="3" height="1"/><rect x="2" y="1" width="1" height="3"/><rect x="9" y="2" width="3" height="1"/><rect x="10" y="1" width="1" height="3"/><rect x="4" y="8" width="3" height="1"/><rect x="5" y="7" width="1" height="3"/><rect x="12" y="8" width="3" height="1"/><rect x="13" y="7" width="1" height="3"/></g></svg>
<svg class="a" style="left:992px;top:191px" width="16" height="12" viewBox="0 0 16 12" ><g fill="#000"><rect x="1" y="2" width="3" height="1"/><rect x="2" y="1" width="1" height="3"/><rect x="9" y="2" width="3" height="1"/><rect x="10" y="1" width="1" height="3"/><rect x="4" y="8" width="3" height="1"/><rect x="5" y="7" width="1" height="3"/><rect x="12" y="8" width="3" height="1"/><rect x="13" y="7" width="1" height="3"/></g></svg>
<svg class="a" style="left:855px;top:306px" width="18" height="14" viewBox="0 0 18 14" ><rect x="0" y="6" width="7" height="1.6" fill="#000"/><path d="M6,3 L9,3 L10,2 L13,2 L13,3 L16,3 L16,10 L13,10 L13,11 L10,11 L9,10 L6,10 Z" fill="#000"/><rect x="10" y="4" width="2" height="5" fill="#fff"/></svg>
<div class="a" style="left:882px;top:304px;width:1px;height:18px;background:#ACA899"></div><div class="a" style="left:883px;top:304px;width:1px;height:18px;background:#fff"></div>
<svg class="a" style="left:898px;top:305px" width="9" height="16" viewBox="0 0 9 16" ><rect x="1" y="1" width="7" height="15" fill="#000"/><rect x="2.5" y="7" width="4" height="8" fill="#fff"/><rect x="2.5" y="2" width="4" height="4" fill="#888"/></svg>
<div class="a" style="left:918px;top:304px;width:1px;height:18px;background:#ACA899"></div><div class="a" style="left:919px;top:304px;width:1px;height:18px;background:#fff"></div>
<svg class="a" style="left:929px;top:305px" width="16" height="15" viewBox="0 0 16 15" ><path d="M1,1 L6,9 M15,1 L10,9" stroke="#AAA" fill="none"/><circle cx="8" cy="11" r="2.5" fill="none" stroke="#AAA"/></svg>
<svg class="a" style="left:954px;top:305px" width="12" height="16" viewBox="0 0 12 16" ><path d="M2,3 L9,3 L9,1" fill="none" stroke="#000" stroke-width="1.5"/><ellipse cx="6" cy="6" rx="4.5" ry="2.5" fill="#fff" stroke="#000" stroke-width="1.4"/><path d="M1.5,6 L1.5,13 A4.5,2.5 0 0 0 10.5,13 L10.5,6" fill="#fff" stroke="#000" stroke-width="1.4"/></svg>
<div class="a" style="left:978px;top:304px;width:1px;height:18px;background:#ACA899"></div><div class="a" style="left:979px;top:304px;width:1px;height:18px;background:#fff"></div>
<svg class="a" style="left:988px;top:305px" width="17" height="16" viewBox="0 0 17 16" ><rect x="1" y="1" width="14" height="14" fill="#fff" stroke="#1A2AC0" stroke-width="2"/><rect x="1" y="1" width="14" height="3" fill="#1A2AC0"/><g fill="#333"><rect x="4" y="7" width="3" height="2"/><rect x="9" y="7" width="3" height="2"/><rect x="4" y="11" width="3" height="2"/><rect x="9" y="11" width="3" height="2"/><rect x="13" y="9" width="3" height="2"/></g></svg>
<div class="a" style="left:845px;top:336px;width:174px;height:2px;background:#000"></div>
<div class="a" style="left:844px;top:346px;width:168px;height:335px;border-left:1px solid #ACA899;border-top:1px solid #ACA899;border-right:1px solid #fff"></div>
<div class="a" style="left:845px;top:348px;width:1px;height:333px;background:#fff"></div>
<div class="a" style="left:1011px;top:347px;width:1px;height:334px;background:#ACA899"></div>
<div class="a" style="left:847px;top:348px;width:2px;height:8px;border-left:1px solid #ACA899;border-right:1px solid #fff"></div>
<div class="a" style="left:1008px;top:348px;width:2px;height:8px;border-left:1px solid #fff;border-right:1px solid #ACA899"></div>
<div class="a" style="left:852px;top:347px;width:157px;height:12px;background:#ECE9D8;border-bottom:1px solid #ACA899;border-right:1px solid #ACA899"></div>
<div class="a" style="left:852px;top:347px;width:156px;height:11px;overflow:hidden"><div class="t" style="left:4px;top:-2px;font-size:13px;font-weight:bold">+</div><div class="t" style="left:45px;top:-2px;font-size:12px;letter-spacing:-0.45px">Soft Selection</div></div>
<div class="a" style="left:848px;top:371px;width:163px;height:310px;border-left:1px solid #ACA899;border-top:1px solid #ACA899;border-right:1px solid #fff"></div>
<div class="a" style="left:849px;top:372px;width:1px;height:309px;background:#fff"></div>
<div class="a" style="left:1010px;top:371px;width:1px;height:310px;background:#ACA899"></div>
<div class="a" style="left:852px;top:363px;width:157px;height:16px;background:#ECE9D8;border:1px solid;border-color:#fff #ACA899 #ACA899 #fff"></div>
<div class="a" style="left:857px;top:371px;width:4px;height:1px;background:#000"></div>
<div class="t" style="left:908px;top:365px;font-size:12px;letter-spacing:-0.45px">Geometry</div>
<div class="a" style="left:855px;top:386px;width:71px;height:18px;background:#ECE9D8;border:1px solid;border-color:#fff #ACA899 #ACA899 #fff;box-shadow:1px 1px 0 #F8F6EE inset"></div><div class="t" style="left:855px;top:389px;width:71px;text-align:center;color:#000;font-size:12px;letter-spacing:-0.45px">Create Line</div>
<div class="a" style="left:929px;top:388px;width:13px;height:13px;background:#fff;border:1px solid;border-color:#ACA899 #fff #fff #ACA899;box-shadow:inset 1px 1px 0 #716F64"></div><svg class="a" style="left:931px;top:390px" width="9" height="9" viewBox="0 0 9 9" ><path d="M1.5,4 L3.5,6.5 L8,1.5" fill="none" stroke="#000" stroke-width="1.8"/></svg>
<div class="t" style="left:947px;top:389px;font-size:12px;letter-spacing:-0.45px">PolyConnect</div>
<div class="a" style="left:855px;top:408px;width:71px;height:18px;background:#ECE9D8;border:1px solid;border-color:#fff #ACA899 #ACA899 #fff;box-shadow:1px 1px 0 #F8F6EE inset"></div><div class="t" style="left:855px;top:411px;width:71px;text-align:center;color:#000;font-size:12px;letter-spacing:-0.45px">Break</div>
<div class="a" style="left:855px;top:431px;width:71px;height:18px;background:#ECE9D8;border:1px solid;border-color:#fff #ACA899 #ACA899 #fff;box-shadow:1px 1px 0 #F8F6EE inset"></div><div class="t" style="left:855px;top:434px;width:71px;text-align:center;color:#000;font-size:12px;letter-spacing:-0.45px">Attach</div>
<div class="a" style="left:855px;top:454px;width:71px;height:18px;background:#ECE9D8;border:1px solid;border-color:#fff #ACA899 #ACA899 #fff;box-shadow:1px 1px 0 #F8F6EE inset"></div><div class="t" style="left:855px;top:457px;width:71px;text-align:center;color:#000;font-size:12px;letter-spacing:-0.45px">Attach Mult.</div>
<div class="a" style="left:929px;top:445px;width:13px;height:13px;background:#fff;border:1px solid;border-color:#ACA899 #fff #fff #ACA899;box-shadow:inset 1px 1px 0 #716F64"></div>
<div class="t" style="left:947px;top:445px;font-size:12px;letter-spacing:-0.45px">Reorient</div>
<div class="a" style="left:854px;top:474px;width:152px;height:67px;border:1px solid;border-color:#ACA899 #fff #fff #ACA899;box-shadow:inset -1px -1px 0 #ACA899, inset 1px 1px 0 #fff"></div>
<div class="a" style="left:859px;top:480px;width:70px;height:18px;background:#ECE9D8;border:1px solid;border-color:#fff #ACA899 #ACA899 #fff;box-shadow:1px 1px 0 #F8F6EE inset"></div><div class="t" style="left:859px;top:483px;width:70px;text-align:center;color:#000;font-size:12px;letter-spacing:-0.45px">Refine</div>
<div class="a" style="left:932px;top:486px;width:13px;height:13px;background:#fff;border:1px solid;border-color:#ACA899 #fff #fff #ACA899;box-shadow:inset 1px 1px 0 #716F64"></div>
<div class="t" style="left:951px;top:487px;font-size:12px;letter-spacing:-0.45px">Connect</div>
<div class="a" style="left:867px;top:505px;width:13px;height:13px;background:#ECE9D8;border:1px solid;border-color:#ACA899 #fff #fff #ACA899;box-shadow:inset 1px 1px 0 #716F64"></div>
<div class="t" style="left:886px;top:505px;font-size:12px;color:#ACA899;letter-spacing:-0.45px">Linear</div>
<div class="a" style="left:867px;top:521px;width:13px;height:13px;background:#ECE9D8;border:1px solid;border-color:#ACA899 #fff #fff #ACA899;box-shadow:inset 1px 1px 0 #716F64"></div>
<div class="t" style="left:886px;top:521px;font-size:12px;color:#ACA899;letter-spacing:-0.45px">Closed</div>
<div class="a" style="left:932px;top:505px;width:13px;height:13px;background:#ECE9D8;border:1px solid;border-color:#ACA899 #fff #fff #ACA899;box-shadow:inset 1px 1px 0 #716F64"></div>
<div class="t" style="left:951px;top:505px;font-size:12px;color:#ACA899;letter-spacing:-0.45px">Bind first</div>
<div class="a" style="left:932px;top:521px;width:13px;height:13px;background:#ECE9D8;border:1px solid;border-color:#ACA899 #fff #fff #ACA899;box-shadow:inset 1px 1px 0 #716F64"></div>
<div class="t" style="left:951px;top:521px;font-size:12px;color:#ACA899;letter-spacing:-0.45px">Bind last</div>
<div class="a" style="left:855px;top:546px;width:71px;height:18px;background:#ECE9D8;border:1px solid;border-color:#fff #ACA899 #ACA899 #fff;box-shadow:1px 1px 0 #F8F6EE inset"></div><div class="t" style="left:855px;top:549px;width:71px;text-align:center;color:#000;font-size:12px;letter-spacing:-0.45px">Weld</div>
<div class="a" style="left:936px;top:549px;width:55px;height:14px;background:#fff;border:1px solid;border-color:#000 #F4F2E8 #F4F2E8 #000;box-shadow:inset 1px 1px 0 #8A8776"></div><div class="t" style="left:939px;top:550px;font-size:12px;letter-spacing:-0.45px">0,511m</div>
<div class="a" style="left:996px;top:548px;width:10px;height:16px;background:#ECE9D8;border:1px solid;border-color:#fff #ACA899 #ACA899 #fff"></div><div class="a" style="left:998px;top:551px;width:0;height:0;border-left:3px solid transparent;border-right:3px solid transparent;border-bottom:3px solid #000"></div><div class="a" style="left:998px;top:558px;width:0;height:0;border-left:3px solid transparent;border-right:3px solid transparent;border-top:3px solid #000"></div>
<div class="a" style="left:855px;top:569px;width:71px;height:18px;background:#ECE9D8;border:1px solid;border-color:#fff #ACA899 #ACA899 #fff;box-shadow:1px 1px 0 #F8F6EE inset"></div><div class="t" style="left:855px;top:572px;width:71px;text-align:center;color:#000;font-size:12px;letter-spacing:-0.45px">Connect</div>
<div class="a" style="left:935px;top:569px;width:71px;height:18px;background:#ECE9D8;border:1px solid;border-color:#fff #ACA899 #ACA899 #fff;box-shadow:1px 1px 0 #F8F6EE inset"></div><div class="t" style="left:935px;top:572px;width:71px;text-align:center;color:#000;font-size:12px;letter-spacing:-0.45px">Insert</div>
<div class="a" style="left:855px;top:592px;width:71px;height:18px;background:#ECE9D8;border:1px solid;border-color:#fff #ACA899 #ACA899 #fff;box-shadow:1px 1px 0 #F8F6EE inset"></div><div class="t" style="left:855px;top:595px;width:71px;text-align:center;color:#000;font-size:12px;letter-spacing:-0.45px">Make First</div>
<div class="a" style="left:935px;top:592px;width:71px;height:18px;background:#ECE9D8;border:1px solid;border-color:#fff #ACA899 #ACA899 #fff;box-shadow:1px 1px 0 #F8F6EE inset"></div><div class="t" style="left:935px;top:595px;width:71px;text-align:center;color:#000;font-size:12px;letter-spacing:-0.45px">Fuse</div>
<div class="a" style="left:855px;top:615px;width:71px;height:18px;background:#ECE9D8;border:1px solid;border-color:#fff #ACA899 #ACA899 #fff;box-shadow:1px 1px 0 #F8F6EE inset"></div><div class="t" style="left:855px;top:618px;width:71px;text-align:center;color:#ACA899;font-size:12px;letter-spacing:-0.45px">Reverse</div>
<div class="a" style="left:935px;top:615px;width:71px;height:18px;background:#ECE9D8;border:1px solid;border-color:#fff #ACA899 #ACA899 #fff;box-shadow:1px 1px 0 #F8F6EE inset"></div><div class="t" style="left:935px;top:618px;width:71px;text-align:center;color:#000;font-size:12px;letter-spacing:-0.45px">Cycle</div>
<div class="a" style="left:855px;top:639px;width:71px;height:18px;background:#ECE9D8;border:1px solid;border-color:#fff #ACA899 #ACA899 #fff;box-shadow:1px 1px 0 #F8F6EE inset"></div><div class="t" style="left:855px;top:642px;width:71px;text-align:center;color:#000;font-size:12px;letter-spacing:-0.45px">CrossInsert</div>
<div class="a" style="left:936px;top:642px;width:55px;height:15px;background:#fff;border:1px solid;border-color:#000 #F4F2E8 #F4F2E8 #000;box-shadow:inset 1px 1px 0 #8A8776"></div><div class="t" style="left:939px;top:644px;font-size:12px;letter-spacing:-0.45px">0,003m</div>
<div class="a" style="left:996px;top:641px;width:10px;height:16px;background:#ECE9D8;border:1px solid;border-color:#fff #ACA899 #ACA899 #fff"></div><div class="a" style="left:998px;top:644px;width:0;height:0;border-left:3px solid transparent;border-right:3px solid transparent;border-bottom:3px solid #000"></div><div class="a" style="left:998px;top:651px;width:0;height:0;border-left:3px solid transparent;border-right:3px solid transparent;border-top:3px solid #000"></div>
<div class="a" style="left:855px;top:660px;width:71px;height:18px;background:#ECE9D8;border:1px solid;border-color:#fff #ACA899 #ACA899 #fff;box-shadow:1px 1px 0 #F8F6EE inset"></div><div class="t" style="left:855px;top:663px;width:71px;text-align:center;color:#000;font-size:12px;letter-spacing:-0.45px">Fillet</div>
<div class="a" style="left:936px;top:663px;width:55px;height:15px;background:#fff;border:1px solid;border-color:#000 #F4F2E8 #F4F2E8 #000;box-shadow:inset 1px 1px 0 #8A8776"></div><div class="t" style="left:939px;top:665px;font-size:12px;letter-spacing:-0.45px">0,0m</div>
<div class="a" style="left:996px;top:662px;width:10px;height:16px;background:#ECE9D8;border:1px solid;border-color:#fff #ACA899 #ACA899 #fff"></div><div class="a" style="left:998px;top:665px;width:0;height:0;border-left:3px solid transparent;border-right:3px solid transparent;border-bottom:3px solid #000"></div><div class="a" style="left:998px;top:672px;width:0;height:0;border-left:3px solid transparent;border-right:3px solid transparent;border-top:3px solid #000"></div>
<div class="a" style="left:1014px;top:347px;width:4px;height:334px;background:#000"></div>
<div class="a" style="left:1014px;top:463px;width:4px;height:95px;background:#ACA899"></div>
<div class="a" style="left:842px;top:681px;width:180px;height:1px;background:#fff"></div>
<div class="a" style="left:840px;top:687px;width:184px;height:1px;background:#ACA899"></div>
<div class="a" style="left:0;top:643px;width:840px;height:18px;background:#3A3D37"></div>
<div class="a" style="left:0;top:660px;width:840px;height:1px;background:#2A3550"></div>
<div class="a" style="left:0;top:643px;width:16px;height:17px;background:#ECE9D8;border-left:1px solid #fff;border-top:1px solid #fff;border-right:1px solid #ACA899"></div>
<svg class="a" style="left:5px;top:648px" width="5" height="8" viewBox="0 0 5 8" ><path d="M4.5,0.5 L0.8,4 L4.5,7.5" fill="none" stroke="#000" stroke-width="1.1"/></svg>
<div class="a" style="left:16px;top:643px;width:125px;height:17px;background:#ECE9D8;border-left:1px solid #fff;border-top:1px solid #fff;border-right:1px solid #000;border-bottom:1px solid #000;box-shadow:inset -1px -1px 0 #ACA899"></div>
<div class="t" style="left:61px;top:646px;font-size:12px;letter-spacing:-0.45px">0 / 100</div>
<div class="a" style="left:141px;top:643px;width:16px;height:17px;background:#ECE9D8;border-left:1px solid #fff"></div>
<svg class="a" style="left:146px;top:647px" width="6" height="9" viewBox="0 0 6 9" ><path d="M0.5,0.5 L4.5,4.5 L0.5,8.5" fill="none" stroke="#000" stroke-width="1.1"/></svg>
<div class="a" style="left:0;top:661px;width:840px;height:1px;background:#F4F4F0"></div>
<div class="a" style="left:0;top:662px;width:840px;height:25px;background:#7E8B5E"></div>
<svg class="a" style="left:0;top:0" width="840" height="690" shape-rendering="crispEdges"><rect x="12" y="663" width="1" height="11" fill="#B0B89A"/><rect x="21" y="663" width="1" height="11" fill="#B0B89A"/><rect x="29" y="663" width="1" height="11" fill="#B0B89A"/><rect x="37" y="663" width="1" height="11" fill="#B0B89A"/><rect x="46" y="663" width="1" height="11" fill="#B0B89A"/><rect x="54" y="663" width="1" height="11" fill="#B0B89A"/><rect x="62" y="663" width="1" height="11" fill="#B0B89A"/><rect x="71" y="663" width="1" height="11" fill="#B0B89A"/><rect x="79" y="663" width="1" height="11" fill="#B0B89A"/><rect x="87" y="663" width="1" height="24" fill="#B0B89A"/><rect x="96" y="663" width="1" height="11" fill="#B0B89A"/><rect x="104" y="663" width="1" height="11" fill="#B0B89A"/><rect x="112" y="663" width="1" height="11" fill="#B0B89A"/><rect x="121" y="663" width="1" height="11" fill="#B0B89A"/><rect x="129" y="663" width="1" height="11" fill="#B0B89A"/><rect x="137" y="663" width="1" height="11" fill="#B0B89A"/><rect x="145" y="663" width="1" height="11" fill="#B0B89A"/><rect x="154" y="663" width="1" height="11" fill="#B0B89A"/><rect x="162" y="663" width="1" height="11" fill="#B0B89A"/><rect x="170" y="663" width="1" height="24" fill="#B0B89A"/><rect x="179" y="663" width="1" height="11" fill="#B0B89A"/><rect x="187" y="663" width="1" height="11" fill="#B0B89A"/><rect x="195" y="663" width="1" height="11" fill="#B0B89A"/><rect x="204" y="663" width="1" height="11" fill="#B0B89A"/><rect x="212" y="663" width="1" height="11" fill="#B0B89A"/><rect x="220" y="663" width="1" height="11" fill="#B0B89A"/><rect x="229" y="663" width="1" height="11" fill="#B0B89A"/><rect x="237" y="663" width="1" height="11" fill="#B0B89A"/><rect x="245" y="663" width="1" height="11" fill="#B0B89A"/><rect x="254" y="663" width="1" height="24" fill="#B0B89A"/><rect x="262" y="663" width="1" height="11" fill="#B0B89A"/><rect x="270" y="663" width="1" height="11" fill="#B0B89A"/><rect x="279" y="663" width="1" height="11" fill="#B0B89A"/><rect x="287" y="663" width="1" height="11" fill="#B0B89A"/><rect x="295" y="663" width="1" height="11" fill="#B0B89A"/><rect x="303" y="663" width="1" height="11" fill="#B0B89A"/><rect x="312" y="663" width="1" height="11" fill="#B0B89A"/><rect x="320" y="663" width="1" height="11" fill="#B0B89A"/><rect x="328" y="663" width="1" height="11" fill="#B0B89A"/><rect x="337" y="663" width="1" height="24" fill="#B0B89A"/><rect x="345" y="663" width="1" height="11" fill="#B0B89A"/><rect x="353" y="663" width="1" height="11" fill="#B0B89A"/><rect x="362" y="663" width="1" height="11" fill="#B0B89A"/><rect x="370" y="663" width="1" height="11" fill="#B0B89A"/><rect x="378" y="663" width="1" height="11" fill="#B0B89A"/><rect x="387" y="663" width="1" height="11" fill="#B0B89A"/><rect x="395" y="663" width="1" height="11" fill="#B0B89A"/><rect x="403" y="663" width="1" height="11" fill="#B0B89A"/><rect x="412" y="663" width="1" height="11" fill="#B0B89A"/><rect x="420" y="663" width="1" height="24" fill="#B0B89A"/><rect x="428" y="663" width="1" height="11" fill="#B0B89A"/><rect x="437" y="663" width="1" height="11" fill="#B0B89A"/><rect x="445" y="663" width="1" height="11" fill="#B0B89A"/><rect x="453" y="663" width="1" height="11" fill="#B0B89A"/><rect x="462" y="663" width="1" height="11" fill="#B0B89A"/><rect x="470" y="663" width="1" height="11" fill="#B0B89A"/><rect x="478" y="663" width="1" height="11" fill="#B0B89A"/><rect x="486" y="663" width="1" height="11" fill="#B0B89A"/><rect x="495" y="663" width="1" height="11" fill="#B0B89A"/><rect x="503" y="663" width="1" height="24" fill="#B0B89A"/><rect x="511" y="663" width="1" height="11" fill="#B0B89A"/><rect x="520" y="663" width="1" height="11" fill="#B0B89A"/><rect x="528" y="663" width="1" height="11" fill="#B0B89A"/><rect x="536" y="663" width="1" height="11" fill="#B0B89A"/><rect x="545" y="663" width="1" height="11" fill="#B0B89A"/><rect x="553" y="663" width="1" height="11" fill="#B0B89A"/><rect x="561" y="663" width="1" height="11" fill="#B0B89A"/><rect x="570" y="663" width="1" height="11" fill="#B0B89A"/><rect x="578" y="663" width="1" height="11" fill="#B0B89A"/><rect x="586" y="663" width="1" height="24" fill="#B0B89A"/><rect x="595" y="663" width="1" height="11" fill="#B0B89A"/><rect x="603" y="663" width="1" height="11" fill="#B0B89A"/><rect x="611" y="663" width="1" height="11" fill="#B0B89A"/><rect x="620" y="663" width="1" height="11" fill="#B0B89A"/><rect x="628" y="663" width="1" height="11" fill="#B0B89A"/><rect x="636" y="663" width="1" height="11" fill="#B0B89A"/><rect x="644" y="663" width="1" height="11" fill="#B0B89A"/><rect x="653" y="663" width="1" height="11" fill="#B0B89A"/><rect x="661" y="663" width="1" height="11" fill="#B0B89A"/><rect x="669" y="663" width="1" height="24" fill="#B0B89A"/><rect x="678" y="663" width="1" height="11" fill="#B0B89A"/><rect x="686" y="663" width="1" height="11" fill="#B0B89A"/><rect x="694" y="663" width="1" height="11" fill="#B0B89A"/><rect x="703" y="663" width="1" height="11" fill="#B0B89A"/><rect x="711" y="663" width="1" height="11" fill="#B0B89A"/><rect x="719" y="663" width="1" height="11" fill="#B0B89A"/><rect x="728" y="663" width="1" height="11" fill="#B0B89A"/><rect x="736" y="663" width="1" height="11" fill="#B0B89A"/><rect x="744" y="663" width="1" height="11" fill="#B0B89A"/><rect x="753" y="663" width="1" height="24" fill="#B0B89A"/><rect x="761" y="663" width="1" height="11" fill="#B0B89A"/><rect x="769" y="663" width="1" height="11" fill="#B0B89A"/><rect x="778" y="663" width="1" height="11" fill="#B0B89A"/><rect x="786" y="663" width="1" height="11" fill="#B0B89A"/><rect x="794" y="663" width="1" height="11" fill="#B0B89A"/><rect x="803" y="663" width="1" height="11" fill="#B0B89A"/><rect x="811" y="663" width="1" height="11" fill="#B0B89A"/><rect x="819" y="663" width="1" height="11" fill="#B0B89A"/><rect x="827" y="663" width="1" height="11" fill="#B0B89A"/><rect x="836" y="663" width="1" height="24" fill="#B0B89A"/></svg>
<div class="a" style="left:0;top:662px;width:839px;height:25px;overflow:hidden">
<div class="t" style="left:67px;width:41px;text-align:center;top:13px;font-size:12px;letter-spacing:-0.45px;color:#2E3A22">10</div>
<div class="t" style="left:150px;width:41px;text-align:center;top:13px;font-size:12px;letter-spacing:-0.45px;color:#2E3A22">20</div>
<div class="t" style="left:234px;width:41px;text-align:center;top:13px;font-size:12px;letter-spacing:-0.45px;color:#2E3A22">30</div>
<div class="t" style="left:317px;width:41px;text-align:center;top:13px;font-size:12px;letter-spacing:-0.45px;color:#2E3A22">40</div>
<div class="t" style="left:400px;width:41px;text-align:center;top:13px;font-size:12px;letter-spacing:-0.45px;color:#2E3A22">50</div>
<div class="t" style="left:483px;width:41px;text-align:center;top:13px;font-size:12px;letter-spacing:-0.45px;color:#2E3A22">60</div>
<div class="t" style="left:566px;width:41px;text-align:center;top:13px;font-size:12px;letter-spacing:-0.45px;color:#2E3A22">70</div>
<div class="t" style="left:649px;width:41px;text-align:center;top:13px;font-size:12px;letter-spacing:-0.45px;color:#2E3A22">80</div>
<div class="t" style="left:733px;width:41px;text-align:center;top:13px;font-size:12px;letter-spacing:-0.45px;color:#2E3A22">90</div>
<div class="t" style="left:816px;width:41px;text-align:center;top:13px;font-size:12px;letter-spacing:-0.45px;color:#2E3A22">100</div>
</div>
<div class="a" style="left:1px;top:663px;width:8px;height:24px;background:#C8C88C;border:1px solid #5A5A3A"></div>
<div class="a" style="left:4px;top:664px;width:1px;height:22px;background:#5A5A3A"></div>
<div class="a" style="left:0;top:687px;width:840px;height:1px;background:#fff"></div>
<div class="a" style="left:1px;top:690px;width:297px;height:23px;background:#DCC4C4;border:1px solid;border-color:#ACA899 #fff #fff #ACA899;box-shadow:inset 1px 1px 0 #716F64, inset -1px -1px 0 #F1EFE2"></div>
<div class="a" style="left:1px;top:712px;width:297px;height:25px;background:#fff;border:1px solid;border-color:#ACA899 #fff #fff #ACA899;box-shadow:inset 1px 1px 0 #716F64, inset -1px -1px 0 #F1EFE2"></div>
<div class="a" style="left:304px;top:689px;width:1px;height:48px;background:#ACA899"></div><div class="a" style="left:305px;top:689px;width:1px;height:48px;background:#fff"></div>
<div class="a" style="left:307px;top:692px;width:40px;height:21px;background:#ECE9D8;border:1px solid;border-color:#ACA899 #fff #fff #ACA899;overflow:hidden"><div class="t" style="left:6px;top:4px;font-size:12px;letter-spacing:-0.45px">1 Shape</div></div>
<svg class="a" style="left:355px;top:694px" width="10" height="13" viewBox="0 0 10 13" ><path d="M2,6 L2,3.5 A3,3 0 0 1 8,3.5 L8,6" fill="none" stroke="#000" stroke-width="1.6"/><rect x="1" y="6" width="8" height="7" fill="#000"/><rect x="1" y="8" width="8" height="1" fill="#fff"/><rect x="1" y="10" width="8" height="1" fill="#fff"/></svg>
<svg class="a" style="left:380px;top:694px" width="16" height="16" viewBox="0 0 16 16" ><rect x="0.5" y="0.5" width="14" height="14" fill="none" stroke="#000"/><path d="M7.5,1 L7.5,14 M1,7.5 L14,7.5" stroke="#000"/><circle cx="7.5" cy="7.5" r="2.5" fill="#000"/></svg>
<div class="t" style="left:401px;top:696px;font-size:12px;letter-spacing:-0.45px">X:</div>
<div class="a" style="left:413px;top:693px;width:58px;height:20px;background:#fff;border:1px solid;border-color:#000 #F4F2E8 #F4F2E8 #000;box-shadow:inset 1px 1px 0 #8A8776"></div>
<div class="t" style="left:484px;top:696px;font-size:12px;letter-spacing:-0.45px">Y:</div>
<div class="a" style="left:495px;top:693px;width:58px;height:20px;background:#fff;border:1px solid;border-color:#000 #F4F2E8 #F4F2E8 #000;box-shadow:inset 1px 1px 0 #8A8776"></div>
<div class="t" style="left:566px;top:696px;font-size:12px;letter-spacing:-0.45px">Z:</div>
<div class="a" style="left:577px;top:693px;width:58px;height:20px;background:#fff;border:1px solid;border-color:#000 #F4F2E8 #F4F2E8 #000;box-shadow:inset 1px 1px 0 #8A8776"></div>
<div class="a" style="left:649px;top:692px;width:100px;height:21px;background:#ECE9D8;border:1px solid;border-color:#ACA899 #fff #fff #ACA899"></div>
<div class="t" style="left:655px;top:697px;font-size:12px;letter-spacing:-0.45px">Grid = 0,254m</div>
<div class="a" style="left:307px;top:717px;width:152px;height:20px;background:#ECE9D8;border-top:1px solid #ACA899;border-left:1px solid #ACA899;overflow:hidden"><div class="t" style="left:5px;top:4px;font-size:12px;letter-spacing:-0.45px">Click or click-and-drag to select objects</div></div>
<div class="a" style="left:460px;top:717px;width:99px;height:20px;background:#ECE9D8;border-top:1px solid #ACA899;border-left:1px solid #ACA899"><div class="t" style="left:5px;top:4px;font-size:12px;letter-spacing:-0.45px">Add Time Tag</div></div>
<div class="a" style="left:566px;top:717px;width:20px;height:19px;background:#7D8561;border:1px solid;border-color:#8D8B7C #fff #fff #8D8B7C"></div>
<svg class="a" style="left:568px;top:719px" width="16" height="15" viewBox="0 0 16 15" ><path d="M1,6 L7,2 L15,5 L15,10 L9,14 L1,11 Z" fill="#fff" stroke="#333" stroke-width="0.8"/><path d="M1,6 L9,9 L15,5 M9,9 L9,14" fill="none" stroke="#999" stroke-width="0.8"/></svg>
<svg class="a" style="left:596px;top:718px" width="16" height="16" viewBox="0 0 16 16" ><g fill="#000"><rect x="1" y="1" width="2" height="2"/><rect x="5" y="1" width="2" height="2"/><rect x="1" y="5" width="2" height="2"/><rect x="1" y="9" width="2" height="2"/><rect x="1" y="13" width="2" height="2"/><rect x="5" y="13" width="2" height="2"/><rect x="9" y="13" width="2" height="2"/></g><circle cx="10" cy="8" r="4.5" fill="#666"/><circle cx="9" cy="7" r="2" fill="#ddd"/></svg>
<div class="a" style="left:624px;top:717px;width:20px;height:19px;background:#7D8561;border:1px solid;border-color:#8D8B7C #fff #fff #8D8B7C"></div>
<svg class="a" style="left:626px;top:719px" width="16" height="16" viewBox="0 0 16 16" ><path d="M1,5 L8,2 L15,5 L15,12 L8,15 L1,12 Z" fill="#555" stroke="#222" stroke-width="0.8"/><path d="M1,5 L8,8 L15,5 L8,2 Z" fill="#fff"/><path d="M1,5 L8,8 L8,15 L1,12 Z" fill="#ddd"/></svg>
<div class="a" style="left:649px;top:719px;width:1px;height:16px;background:#ACA899"></div><div class="a" style="left:650px;top:719px;width:1px;height:16px;background:#fff"></div>
<svg class="a" style="left:653px;top:717px" width="22" height="18" viewBox="0 0 22 18" ><g transform="translate(1,3) scale(0.8) rotate(40 6 11)"><path d="M2.5,14 L2.5,10 A3.5,3.5 0 0 1 9.5,10 L9.5,14" fill="none" stroke="#C01010" stroke-width="2.6"/><rect x="1.2" y="12.5" width="2.6" height="2.5" fill="#111"/><rect x="8.2" y="12.5" width="2.6" height="2.5" fill="#111"/></g><text x="10" y="9" font-size="10" font-family="Liberation Sans">3</text></svg>
<svg class="a" style="left:676px;top:717px" width="22" height="18" viewBox="0 0 22 18" ><g transform="translate(1,3) scale(0.8) rotate(40 6 11)"><path d="M2.5,14 L2.5,10 A3.5,3.5 0 0 1 9.5,10 L9.5,14" fill="none" stroke="#C01010" stroke-width="2.6"/><rect x="1.2" y="12.5" width="2.6" height="2.5" fill="#111"/><rect x="8.2" y="12.5" width="2.6" height="2.5" fill="#111"/></g><path d="M10,2 L13,10 L18,10 M8.5,4 L10,1.5 L12,3.5 M16.5,8.5 L18,10 L16.5,11.5 M9,12 L17,12" stroke="#000" fill="none" stroke-width="1"/></svg>
<svg class="a" style="left:700px;top:717px" width="22" height="18" viewBox="0 0 22 18" ><g transform="translate(1,3) scale(0.8) rotate(40 6 11)"><path d="M2.5,14 L2.5,10 A3.5,3.5 0 0 1 9.5,10 L9.5,14" fill="none" stroke="#C01010" stroke-width="2.6"/><rect x="1.2" y="12.5" width="2.6" height="2.5" fill="#111"/><rect x="8.2" y="12.5" width="2.6" height="2.5" fill="#111"/></g><text x="9" y="9" font-size="10" font-family="Liberation Sans">%</text></svg>
<div class="a" style="left:723px;top:719px;width:1px;height:16px;background:#ACA899"></div><div class="a" style="left:724px;top:719px;width:1px;height:16px;background:#fff"></div>
<svg class="a" style="left:728px;top:717px" width="22" height="18" viewBox="0 0 22 18" ><g transform="translate(1,3) scale(0.8) rotate(40 6 11)"><path d="M2.5,14 L2.5,10 A3.5,3.5 0 0 1 9.5,10 L9.5,14" fill="none" stroke="#C01010" stroke-width="2.6"/><rect x="1.2" y="12.5" width="2.6" height="2.5" fill="#111"/><rect x="8.2" y="12.5" width="2.6" height="2.5" fill="#111"/></g><rect x="14" y="3" width="6" height="12" fill="#ECE9D8" stroke="#999" stroke-width="0.8"/><path d="M15.5,8 L17,6 L18.5,8 M15.5,10 L17,12 L18.5,10" stroke="#000" fill="none" stroke-width="0.8"/></svg>
<div class="a" style="left:753px;top:691px;width:48px;height:44px;background:#ECE9D8;border:1px solid;border-color:#fff #8A8776 #8A8776 #fff;box-shadow:inset -1px -1px 0 #ACA899"></div>
<div class="t" style="left:757px;top:708px;font-size:12px;letter-spacing:-0.45px">Animate</div>
<svg class="a" style="left:806px;top:696px" width="18" height="12" viewBox="0 0 18 12" ><rect x="1" y="1" width="2" height="10" fill="#333"/><path d="M9,1 L3,6 L9,11Z M16,1 L10,6 L16,11Z" fill="#333"/></svg>
<div class="a" style="left:829px;top:693px;width:1px;height:18px;background:#ACA899"></div><div class="a" style="left:830px;top:693px;width:1px;height:18px;background:#fff"></div>
<svg class="a" style="left:834px;top:696px" width="14" height="12" viewBox="0 0 14 12" ><path d="M8,1 L2,6 L8,11Z" fill="#333"/><rect x="9" y="1" width="3" height="10" fill="#333"/></svg>
<div class="a" style="left:857px;top:694px;width:14px;height:15px;border:1px solid #000"></div>
<svg class="a" style="left:859px;top:696px" width="10" height="11" viewBox="0 0 10 11" ><path d="M2,1 L8,5.5 L2,10Z" fill="#333"/></svg>
<div class="a" style="left:871px;top:709px;width:2px;height:2px;background:#000"></div>
<svg class="a" style="left:881px;top:696px" width="14" height="12" viewBox="0 0 14 12" ><rect x="1" y="1" width="3" height="10" fill="#333"/><path d="M5,1 L11,6 L5,11Z" fill="#333"/></svg>
<div class="a" style="left:900px;top:693px;width:1px;height:18px;background:#ACA899"></div><div class="a" style="left:901px;top:693px;width:1px;height:18px;background:#fff"></div>
<svg class="a" style="left:904px;top:696px" width="18" height="12" viewBox="0 0 18 12" ><path d="M1,1 L7,6 L1,11Z M8,1 L14,6 L8,11Z" fill="#333"/><rect x="15" y="1" width="2" height="10" fill="#333"/></svg>
<div class="a" style="left:926px;top:693px;width:1px;height:18px;background:#ACA899"></div><div class="a" style="left:927px;top:693px;width:1px;height:18px;background:#fff"></div>
<svg class="a" style="left:807px;top:718px" width="18" height="10" viewBox="0 0 18 10" ><circle cx="4" cy="4.5" r="3" fill="none" stroke="#000" stroke-width="2"/><rect x="7" y="3.5" width="10" height="2" fill="#000"/><rect x="12" y="5" width="2" height="4" fill="#000"/><rect x="15" y="5" width="2" height="3" fill="#000"/></svg>
<div class="a" style="left:829px;top:715px;width:1px;height:20px;background:#ACA899"></div><div class="a" style="left:830px;top:715px;width:1px;height:20px;background:#fff"></div>
<div class="a" style="left:830px;top:715px;width:68px;height:19px;background:#fff;border:1px solid;border-color:#000 #F4F2E8 #F4F2E8 #000;box-shadow:inset 1px 1px 0 #8A8776"></div><div class="t" style="left:834px;top:719px;font-size:12px;letter-spacing:-0.45px">0</div>
<div class="a" style="left:900px;top:715px;width:1px;height:20px;background:#ACA899"></div><div class="a" style="left:901px;top:715px;width:1px;height:20px;background:#fff"></div>
<svg class="a" style="left:906px;top:716px" width="16" height="16" viewBox="0 0 16 16" ><rect x="1" y="1" width="11" height="11" fill="#fff" stroke="#000" stroke-width="1.4"/><rect x="1" y="1" width="11" height="2" fill="#000"/><circle cx="11" cy="11" r="4.5" fill="#fff" stroke="#D01010" stroke-width="1.2"/><path d="M11,8 L11,12 M9,10.5 L11,12.5 L13,10.5" stroke="#000" fill="none" stroke-width="1"/></svg>
<div class="a" style="left:926px;top:715px;width:1px;height:20px;background:#ACA899"></div><div class="a" style="left:927px;top:715px;width:1px;height:20px;background:#fff"></div>
<svg class="a" style="left:931px;top:693px" width="17" height="18" viewBox="0 0 17 18" ><circle cx="6" cy="6" r="4.5" fill="#E8E8F0" stroke="#1A2AB0" stroke-width="1.5"/><path d="M9.5,9.5 L15,15" stroke="#1A2AB0" stroke-width="2.5"/></svg>
<svg class="a" style="left:953px;top:693px" width="19" height="18" viewBox="0 0 19 18" ><rect x="6.5" y="1.5" width="11" height="9" fill="#C8C8C8" stroke="#A01818" stroke-width="1.4"/><path d="M12,1.5 L12,10.5 M6.5,6 L17.5,6" stroke="#A01818" stroke-width="1.2"/><circle cx="5" cy="10" r="3.5" fill="#E8E8F0" stroke="#1A2AB0" stroke-width="1.3"/><path d="M7.5,12.5 L10.5,16" stroke="#1A2AB0" stroke-width="2"/></svg>
<svg class="a" style="left:976px;top:693px" width="20" height="19" viewBox="0 0 20 19" ><path d="M1,5 L1,1 L5,1 M14,1 L18,1 L18,5 M1,13 L1,17 L5,17 M18,13 L18,17 L14,17" fill="none" stroke="#111" stroke-width="1.4"/><path d="M4,6 L7,3 L16,3 L16,12 L13,15 L4,15Z" fill="#BCBCC8" stroke="#1A2AB0" stroke-width="1.2"/><path d="M4,6 L13,6 L16,3 M13,6 L13,15" fill="none" stroke="#1A2AB0" stroke-width="1.2"/></svg>
<svg class="a" style="left:999px;top:693px" width="19" height="19" viewBox="0 0 19 19" ><rect x="6.5" y="1.5" width="11" height="9" fill="#C8C8C8" stroke="#A01818" stroke-width="1.4"/><path d="M12,1.5 L12,10.5 M6.5,6 L17.5,6" stroke="#A01818" stroke-width="1.2"/><path d="M1.5,9 L4,6.5 L10,6.5 L10,14 L7.5,16.5 L1.5,16.5Z" fill="#BCBCC8" stroke="#1A2AB0" stroke-width="1.2"/><rect x="17" y="17" width="2" height="2" fill="#000"/></svg>
<svg class="a" style="left:930px;top:716px" width="18" height="18" viewBox="0 0 18 18" ><rect x="1" y="1" width="16" height="16" fill="none" stroke="#111" stroke-width="1.4" stroke-dasharray="2,1.5"/><circle cx="7" cy="7" r="3.8" fill="#E8E8F0" stroke="#1A2AB0" stroke-width="1.3"/><path d="M9.5,9.5 L14,14" stroke="#1A2AB0" stroke-width="2"/></svg>
<svg class="a" style="left:954px;top:716px" width="17" height="18" viewBox="0 0 17 18" ><path d="M3,9 L3,4 Q4,2 5,4 L5,8 L5,2 Q6.5,0 8,2 L8,8 L8,1.5 Q9.5,0 11,1.5 L11,8 L11,3 Q12.5,1.5 14,3 L14,11 Q14,16 9,17 L7,17 Q3,16 1,11 L1,8 Q2,7 3,9Z" fill="#E4E4E4" stroke="#333" stroke-width="0.9"/></svg>
<svg class="a" style="left:976px;top:716px" width="20" height="19" viewBox="0 0 20 19" ><circle cx="9" cy="10" r="5.5" fill="#B8B8C0" stroke="#444" stroke-width="0.8"/><path d="M9,1 L9,10 L18,10 M9,10 L2,17" stroke="#1A2AB0" stroke-width="1.3" fill="none"/><path d="M7,3 L9,0 L11,3 M16,8 L19,10 L16,12" stroke="#1A2AB0" fill="none"/><rect x="18" y="17" width="2" height="2" fill="#000"/></svg>
<svg class="a" style="left:999px;top:716px" width="18" height="18" viewBox="0 0 18 18" ><rect x="1" y="1" width="12" height="12" fill="#fff" stroke="#1A2AB0" stroke-width="1.5"/><rect x="8" y="8" width="9" height="9" fill="#fff" stroke="#111" stroke-width="1.3"/><path d="M4,4 L10,10" stroke="#222" stroke-dasharray="1.2,1"/></svg>
</body></html>
